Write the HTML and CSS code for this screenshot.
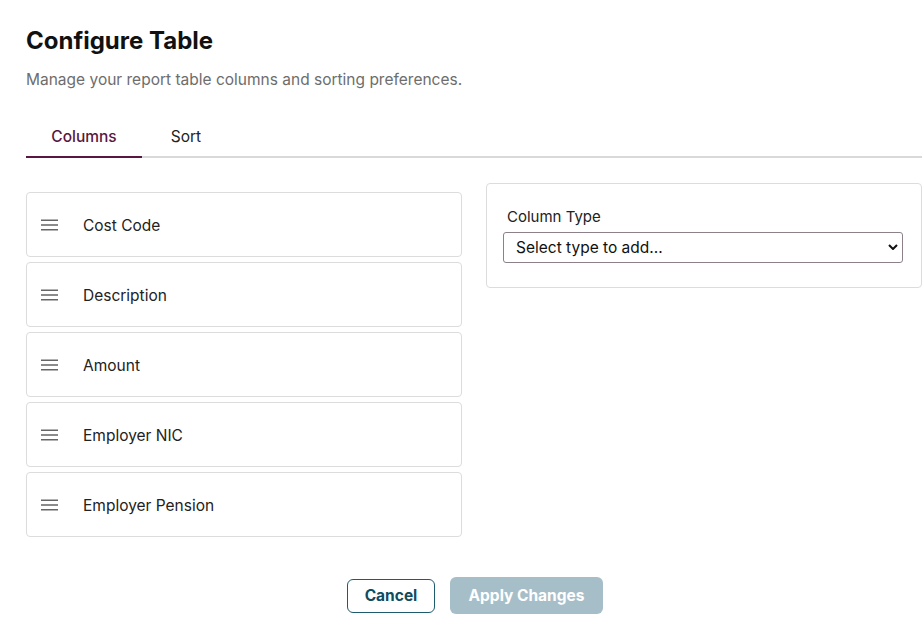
FILE: index.html
```html
<!DOCTYPE html>
<html lang="en">
<head>
<meta charset="utf-8">
<title>Configure Table</title>
<link rel="stylesheet" href="styles.css">
</head>
<body>
<div class="dialog">
  <h1 class="title">Configure Table</h1>
  <p class="subtitle">Manage your report table columns and sorting preferences.</p>

  <div class="tabs">
    <button class="tab active">Columns</button>
    <button class="tab">Sort</button>
  </div>

  <div class="panes">
    <ul class="column-list">
      <li class="column-item"><svg class="grip" viewBox="0 0 18 12"><path d="M0 1h18M0 6h18M0 11h18"/></svg><span>Cost Code</span></li>
      <li class="column-item"><svg class="grip" viewBox="0 0 18 12"><path d="M0 1h18M0 6h18M0 11h18"/></svg><span>Description</span></li>
      <li class="column-item"><svg class="grip" viewBox="0 0 18 12"><path d="M0 1h18M0 6h18M0 11h18"/></svg><span>Amount</span></li>
      <li class="column-item"><svg class="grip" viewBox="0 0 18 12"><path d="M0 1h18M0 6h18M0 11h18"/></svg><span>Employer NIC</span></li>
      <li class="column-item"><svg class="grip" viewBox="0 0 18 12"><path d="M0 1h18M0 6h18M0 11h18"/></svg><span>Employer Pension</span></li>
    </ul>

    <div class="add-panel">
      <label class="field-label" for="col-type">Column Type</label>
      <div class="select-wrap">
        <select id="col-type" class="select">
          <option>Select type to add...</option>
        </select>
        <svg class="chevron" viewBox="0 0 10 6"><path d="M1 1l4 4 4-4"/></svg>
      </div>
    </div>
  </div>

  <div class="actions">
    <button class="btn btn-outline">Cancel</button>
    <button class="btn btn-primary" disabled>Apply Changes</button>
  </div>
</div>
</body>
</html>
```
FILE: styles.css
```css
* { box-sizing: border-box; }

html, body {
  margin: 0;
  padding: 0;
  background: #fff;
  overflow: hidden;
}

body {
  font-family: Inter, "Noto Sans", sans-serif;
  color: #1f1f1f;
}

.dialog {
  width: 922px;
  padding: 26px 0 0 26px;
}

.title {
  margin: 0;
  font-size: 24px;
  font-weight: 700;
  line-height: 30px;
  color: #111;
}

.subtitle {
  margin: 13px 0 0;
  font-size: 15.5px;
  line-height: 22px;
  color: #6d6d6d;
}

.tabs {
  display: flex;
  margin-top: 24px;
  border-bottom: 2px solid #d9d9d9;
}

.tab {
  border: 0;
  background: none;
  font: inherit;
  font-size: 15.5px;
  color: #222;
  height: 43px;
  padding: 1px 0 0;
  margin-bottom: -2px;
  border-bottom: 2px solid transparent;
  cursor: pointer;
}

.tab:first-child { width: 116px; }
.tab:nth-child(2) { width: 88px; }

.tab.active {
  color: #5a1640;
  border-bottom-color: #5a1640;
  font-weight: 500;
}

.panes {
  display: flex;
  gap: 24px;
  align-items: flex-start;
  width: 896px;
  margin-top: 25px;
}

.column-list {
  list-style: none;
  margin: 9px 0 0;
  padding: 0;
  width: 436px;
  display: flex;
  flex-direction: column;
  gap: 5px;
}

.column-item {
  height: 65px;
  border: 1px solid #dcdcdc;
  border-radius: 4px;
  display: flex;
  align-items: center;
  padding: 2px 0 0 14px;
  font-size: 15.5px;
  color: #222;
}

.grip {
  flex: none;
  width: 17px;
  height: 12px;
  margin: -2px 25px 0 0;
  fill: none;
  stroke: #666;
  stroke-width: 1.6;
}

.add-panel {
  width: 436px;
  border: 1px solid #dcdcdc;
  border-radius: 4px;
  padding: 24px 18px 24px 16px;
  display: flex;
  flex-direction: column;
}

.field-label {
  font-size: 15px;
  line-height: 18px;
  color: #222;
  padding-left: 4px;
  margin-bottom: 6px;
}

.select-wrap {
  position: relative;
}

.select {
  appearance: none;
  width: 100%;
  height: 31px;
  border: 1px solid #8c8089;
  border-radius: 3px;
  background: #fff;
  font: inherit;
  font-size: 15.5px;
  color: #111;
  padding: 0 12px;
}

.chevron {
  position: absolute;
  right: 5px;
  top: 12px;
  width: 10px;
  height: 6px;
  fill: none;
  stroke: #111;
  stroke-width: 2;
  pointer-events: none;
}

.actions {
  width: 896px;
  display: flex;
  justify-content: center;
  align-items: center;
  gap: 15px;
  margin-top: 40px;
  padding-left: 2px;
}

.btn {
  font: inherit;
  font-size: 15.5px;
  font-weight: 700;
  border-radius: 6px;
  cursor: pointer;
}

.btn-outline {
  width: 88px;
  height: 34px;
  background: #fff;
  border: 1px solid #1d5b6e;
  color: #0f4c5e;
}

.btn-primary {
  width: 153px;
  height: 37px;
  background: #a6bec8;
  border: 0;
  color: #fff;
}
```
